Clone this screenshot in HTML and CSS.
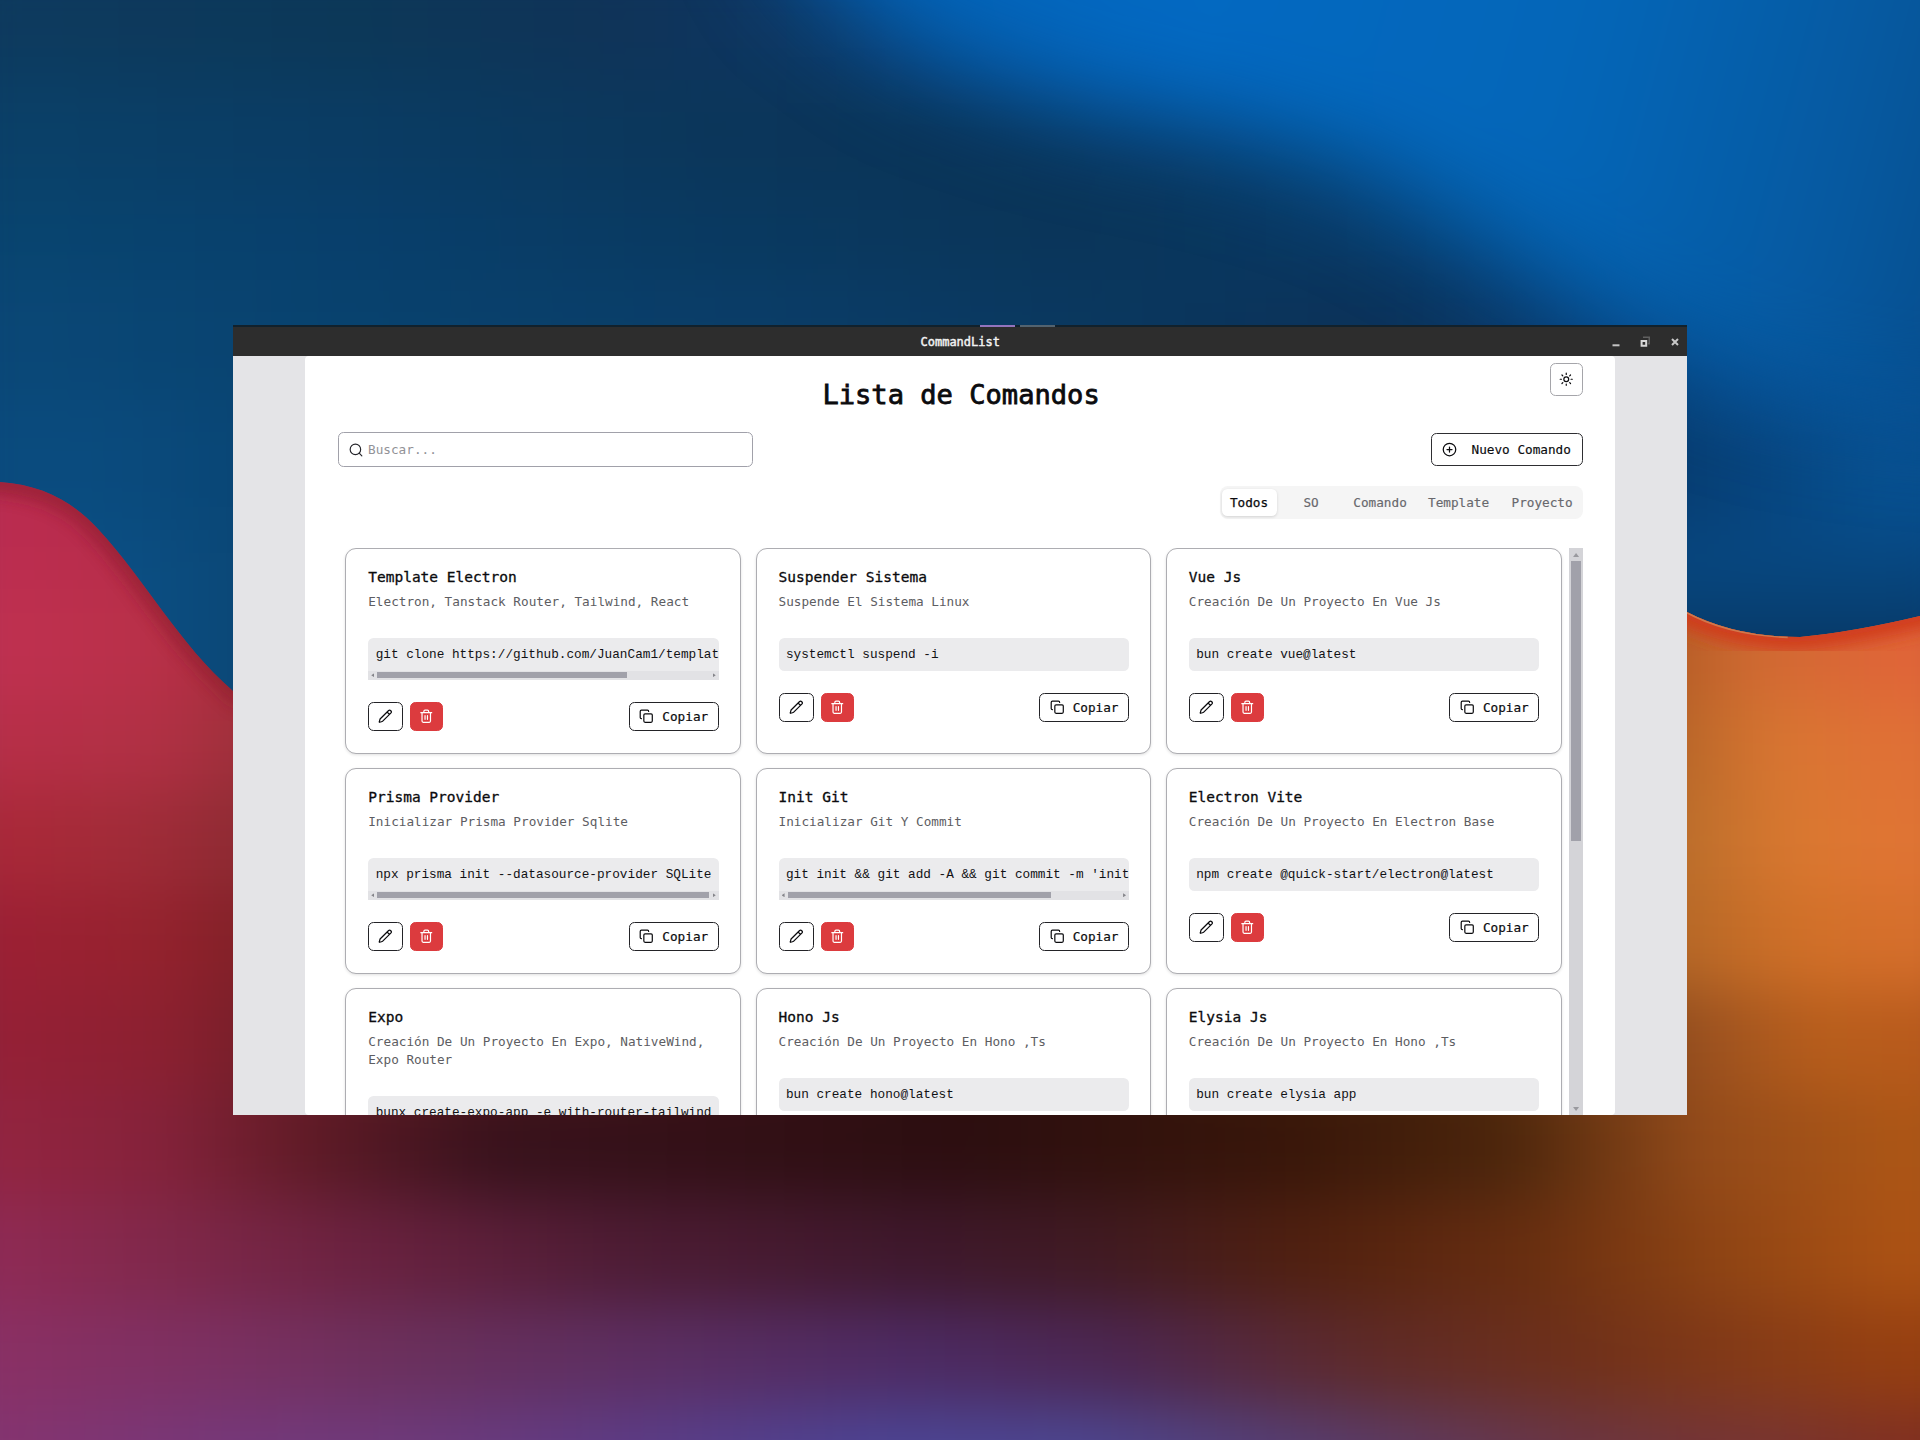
FILE: index.html
```html
<!DOCTYPE html>
<html lang="es">
<head>
<meta charset="utf-8">
<title>CommandList</title>
<link rel="stylesheet" href="styles.css">
</head>
<body>
<svg class="sprite" aria-hidden="true">
  <symbol id="pencil" viewBox="0 0 24 24"><path d="M21.17 6.81a1 1 0 0 0-3.99-3.99L3.84 16.17a2 2 0 0 0-.5.83l-1.32 4.35a.5.5 0 0 0 .62.62l4.35-1.32a2 2 0 0 0 .83-.5zM15 5l4 4"/></symbol>
  <symbol id="trash" viewBox="0 0 24 24"><path d="M3 6h18M19 6v14c0 1-1 2-2 2H7c-1 0-2-1-2-2V6M8 6V4c0-1 1-2 2-2h4c1 0 2 1 2 2v2M10 11v6M14 11v6"/></symbol>
  <symbol id="copy" viewBox="0 0 24 24"><rect x="8" y="8" width="14" height="14" rx="2"/><path d="M4 16c-1.1 0-2-.9-2-2V4c0-1.1.9-2 2-2h10c1.1 0 2 .9 2 2"/></symbol>
</svg>
<div class="wallpaper">
  <div class="sky"><i class="s1"></i><i class="s2"></i><i class="s3"></i><i class="s4"></i><i class="s5"></i><i class="s6"></i></div>
  <svg class="glow" viewBox="0 0 1568 1176">
    <defs>
      <filter id="soft" filterUnits="userSpaceOnUse" x="300" y="-400" width="1700" height="1200" color-interpolation-filters="sRGB"><feGaussianBlur stdDeviation="40"/></filter>
      <linearGradient id="azure" x1="640" y1="0" x2="1640" y2="260" gradientUnits="userSpaceOnUse">
        <stop offset="0" stop-color="#0260b2"/><stop offset=".3" stop-color="#0369c2"/><stop offset=".62" stop-color="#0466b8"/><stop offset=".85" stop-color="#0659a0"/><stop offset="1" stop-color="#074b88"/>
      </linearGradient>
    </defs>
    <path d="M570-200L660-20L750 46L870 86L1000 112L1110 145L1220 205L1330 275L1440 320L1560 340L1900 350V-200Z" fill="url(#azure)" filter="url(#soft)"/>
  </svg>
  <div class="dunes">
    <div class="bands"><i class="d1"></i><i class="d2"></i><i class="d3"></i><i class="d4"></i><i class="d5"></i><i class="d6"></i><i class="d7"></i><i class="d8"></i><i class="d9"></i><i class="d10"></i></div>
    <svg class="rims" viewBox="0 0 1568 1176">
      <defs><filter id="rim" x="-20%" y="-40%" width="140%" height="180%"><feGaussianBlur stdDeviation="7"/></filter></defs>
      <path d="M-20 393C35 396 60 410 80 432C120 475 145 525 200 572" fill="none" stroke="#8a1a2c" stroke-width="14" opacity=".75" filter="url(#rim)"/>
      <path d="M1360 492Q1410 520 1470 520Q1515 516 1590 497" fill="none" stroke="#d03a1e" stroke-width="22" filter="url(#rim)"/>
      <path d="M1376 499Q1410 518 1460 520" fill="none" stroke="#d0784c" stroke-width="2.5"/>
    </svg>
  </div>
</div>

<main class="window">
  <div class="backdrop-strip"><i class="mark violet"></i><i class="mark grey"></i></div>
  <header class="titlebar">
    <span class="window-title">CommandList</span>
    <div class="window-controls">
      <svg width="8" height="12" viewBox="0 0 8 12"><path d="M.5 8.3h7v2h-7z" fill="#c4c4c4"/></svg>
      <svg width="10" height="12" viewBox="0 0 10 12"><path d="M3 1.2h6.3v6.4H7.8" fill="none" stroke="#606060" stroke-width="1.6"/><path d="M1.6 5h4.6v4.7H1.6z" fill="none" stroke="#d8d8d8" stroke-width="2"/></svg>
      <svg width="8" height="12" viewBox="0 0 8 12"><path d="M1 3l6 6M7 3L1 9" stroke="#c8c8c8" stroke-width="2"/></svg>
    </div>
  </header>
  <div class="page">
    <section class="panel">
      <div class="heading">
        <h1>Lista de Comandos</h1>
        <button class="theme"><svg class="icon" width="14.5" height="14.5" viewBox="0 0 24 24"><circle cx="12" cy="12" r="4"/><path d="M12 2v2M12 20v2M4.9 4.9l1.4 1.4M17.7 17.7l1.4 1.4M2 12h2M20 12h2M6.3 17.7l-1.4 1.4M19.1 4.9l-1.4 1.4"/></svg></button>
      </div>
      <div class="toolbar">
        <label class="search"><svg class="icon" width="14" height="14" viewBox="0 0 24 24"><circle cx="11" cy="11" r="9"/><path d="M22 22l-4.5-4.5"/></svg><span>Buscar...</span></label>
        <button class="create"><svg class="icon" width="15" height="15" viewBox="0 0 24 24"><circle cx="12" cy="12" r="10"/><path d="M8 12h8M12 8v8"/></svg><span>Nuevo Comando</span></button>
      </div>
      <nav class="tabs"><span class="tab active">Todos</span><span class="tab">SO</span><span class="tab">Comando</span><span class="tab">Template</span><span class="tab">Proyecto</span></nav>
      <div class="list">
        <div class="cards">
          <article class="card"><h2>Template Electron</h2><p>Electron, Tanstack Router, Tailwind, React</p>
            <div class="code"><code>git clone https://github.com/JuanCam1/templat</code><div class="hbar"><b></b><span class="track"><i class="thumb" style="width:75.2%"></i></span><b class="next"></b></div></div>
            <div class="actions"><button class="edit"><svg class="icon"><use href="#pencil"/></svg></button><button class="delete"><svg class="icon"><use href="#trash"/></svg></button><button class="copy"><svg class="icon"><use href="#copy"/></svg>Copiar</button></div></article>
          <article class="card"><h2>Suspender Sistema</h2><p>Suspende El Sistema Linux</p>
            <div class="code"><code>systemctl suspend -i</code></div>
            <div class="actions"><button class="edit"><svg class="icon"><use href="#pencil"/></svg></button><button class="delete"><svg class="icon"><use href="#trash"/></svg></button><button class="copy"><svg class="icon"><use href="#copy"/></svg>Copiar</button></div></article>
          <article class="card"><h2>Vue Js</h2><p>Creación De Un Proyecto En Vue Js</p>
            <div class="code"><code>bun create vue@latest</code></div>
            <div class="actions"><button class="edit"><svg class="icon"><use href="#pencil"/></svg></button><button class="delete"><svg class="icon"><use href="#trash"/></svg></button><button class="copy"><svg class="icon"><use href="#copy"/></svg>Copiar</button></div></article>
          <article class="card"><h2>Prisma Provider</h2><p>Inicializar Prisma Provider Sqlite</p>
            <div class="code"><code>npx prisma init --datasource-provider SQLite</code><div class="hbar"><b></b><span class="track"><i class="thumb" style="width:99.8%"></i></span><b class="next"></b></div></div>
            <div class="actions"><button class="edit"><svg class="icon"><use href="#pencil"/></svg></button><button class="delete"><svg class="icon"><use href="#trash"/></svg></button><button class="copy"><svg class="icon"><use href="#copy"/></svg>Copiar</button></div></article>
          <article class="card"><h2>Init Git</h2><p>Inicializar Git Y Commit</p>
            <div class="code"><code>git init &amp;&amp; git add -A &amp;&amp; git commit -m 'init</code><div class="hbar"><b></b><span class="track"><i class="thumb" style="width:79.3%"></i></span><b class="next"></b></div></div>
            <div class="actions"><button class="edit"><svg class="icon"><use href="#pencil"/></svg></button><button class="delete"><svg class="icon"><use href="#trash"/></svg></button><button class="copy"><svg class="icon"><use href="#copy"/></svg>Copiar</button></div></article>
          <article class="card"><h2>Electron Vite</h2><p>Creación De Un Proyecto En Electron Base</p>
            <div class="code"><code>npm create @quick-start/electron@latest</code></div>
            <div class="actions"><button class="edit"><svg class="icon"><use href="#pencil"/></svg></button><button class="delete"><svg class="icon"><use href="#trash"/></svg></button><button class="copy"><svg class="icon"><use href="#copy"/></svg>Copiar</button></div></article>
          <article class="card"><h2>Expo</h2><p>Creación De Un Proyecto En Expo, NativeWind, Expo Router</p>
            <div class="code"><code>bunx create-expo-app -e with-router-tailwind</code></div></article>
          <article class="card"><h2>Hono Js</h2><p>Creación De Un Proyecto En Hono ,Ts</p>
            <div class="code"><code>bun create hono@latest</code></div></article>
          <article class="card"><h2>Elysia Js</h2><p>Creación De Un Proyecto En Hono ,Ts</p>
            <div class="code"><code>bun create elysia app</code></div></article>
        </div>
        <div class="vbar"><b></b><i></i><b class="down"></b></div>
      </div>
    </section>
  </div>
</main>
</body>
</html>
```

FILE: styles.css
```css
* { box-sizing: border-box; }
body {
  margin: 0; width: 1920px; height: 1440px; overflow: hidden; position: relative;
  background: #0a3a62; color: #0b0b0e;
  font-family: "DejaVu Sans Mono", "Liberation Mono", monospace; font-size: 12.7px;
  padding: 325px 0 0 232.5px;
}
h1, h2, p { margin: 0; font-weight: 400; }
button { font: inherit; color: inherit; background: #fff; padding: 0; display: flex; align-items: center; }
.sprite { display: none; }
.icon { fill: none; stroke: currentColor; stroke-width: 2; stroke-linecap: round; stroke-linejoin: round; flex: none; }

/* Desktop wallpaper */
.wallpaper { position: absolute; inset: 0; overflow: hidden; }
.wallpaper i { display: block; }
.glow, .rims { position: absolute; left: 0; top: 0; width: 1920px; height: 1440px; }
.sky { position: absolute; inset: -60px; filter: blur(34px); }
.s1 { height: 140px; background: linear-gradient(90deg, #0d3a5e 5%, #0c3858 20%, #0f3358 33%, #0c3a6c 50%, #0a3a6c); }
.s2 { height: 110px; background: linear-gradient(90deg, #0a4068 5%, #0a3c64 20%, #0b365a 38%, #0a3458 50%, #08345c); }
.s3 { height: 90px; background: linear-gradient(90deg, #08446f 5%, #083f6c 20%, #093a62 35%, #0a3559 55%, #083a68 75%, #06509a); }
.s4 { height: 120px; background: linear-gradient(90deg, #0a4776 5%, #08426e 20%, #0a3d68 40%, #0a375e 58%, #0b3158 70%, #083c70 82%, #06529a 95%); }
.s5 { height: 130px; background: linear-gradient(90deg, #0a4b7e 8%, #094574 16%, #0a375e 60%, #073c70 85%, #075090 95%); }
.s6 { height: 970px; background: linear-gradient(90deg, #0b5086 8%, #0b4674 16%, #0a375e 60%, transparent 80%), linear-gradient(#074a86, #07447a 60px, #073662 130px, #072f54 200px); }
.dunes {
  position: absolute; inset: 0;
  clip-path: path("M0 482C43 485 73 502 98 529C147 582 178 643 233 691L400 760L1500 760L1687 612Q1735 637 1800 637Q1853 632 1920 616V1440H0Z");
}
.bands { position: absolute; left: -60px; right: -60px; top: 400px; filter: blur(30px); }
.d1 { height: 180px; background: linear-gradient(90deg, #bb2c50 3%, #b52c48 12%, #a82c40 20%, #b05024 82%, #d45a2c 90%, #dc5a34); }
.d2 { height: 120px; background: linear-gradient(90deg, #bf3050 3%, #b83048 11%, #a22c38 16%, #b05a24 84%, #d06a32 89%, #e06438 96%); }
.d3 { height: 90px; background: linear-gradient(90deg, #b72f48 3%, #b03044 11%, #9a3038 16%, #b06226 84%, #d87632 90%, #e07036 96%); }
.d4 { height: 100px; background: linear-gradient(90deg, #aa2838 3%, #a02c38 10%, #8a2a32 16%, #b46c2a 84%, #da7830 91%, #e07434 96%); }
.d5 { height: 100px; background: linear-gradient(90deg, #9c2034 3%, #96222e 10%, #7e2026 16%, #b06626 84%, #d07028 91%, #d66f2c 96%); }
.d6 { height: 100px; background: linear-gradient(90deg, #952036 3%, #8c2030 11%, #6e1e26 17%, #2a0c0c 50%, #48240a 74%, #985020 86%, #b85e1c 92%, #b85a1c 97%); }
.d7 { height: 110px; background: linear-gradient(90deg, #932440 3%, #84223a 11%, #641c28 17%, #38121c 27%, #2c0e10 50%, #38160a 66%, #4c260c 77%, #924a1a 86%, #ac5616 96%); }
.d8 { height: 105px; background: linear-gradient(90deg, #8f2a54 3%, #80284a 11%, #6c2240 20%, #4e1c34 33%, #3e182c 48%, #401a22 57%, #50200f 67%, #682e10 78%, #8e4414 87%, #ac5214 96%); }
.d9 { height: 100px; background: linear-gradient(90deg, #8a3064 3%, #7c3062 13%, #6a305c 23%, #5a2e62 36%, #4c2a62 48%, #4c2650 58%, #5e2a28 70%, #6e301a 80%, #883c16 90%, #984010 97%); }
.d10 { height: 180px; background: linear-gradient(90deg, #843470 3%, #75387a 14%, #6c3a7c 24%, #5c3c86 34%, #4c4494 46%, #4c4690 56%, #583c6c 68%, #6a3544 80%, #783430 90%, #802f20 97%); }

/* Application window */
.window { position: relative; width: 1454.5px; height: 790px; display: flex; flex-direction: column; overflow: hidden; background: #e4e4e7; }
.backdrop-strip { height: 2px; flex: none; background: #11212c; display: flex; gap: 5px; padding-left: 747.5px; }
.mark { width: 35px; height: 2px; }
.violet { background: #9474bd; }
.grey { background: #53636f; }
.titlebar { height: 29px; flex: none; background: #2d2d2d; display: grid; grid-template-columns: 1fr auto 1fr; align-items: center; }
.window-title { grid-column: 2; padding-left: 1px; color: #f2f2f2; font-size: 12px; -webkit-text-stroke: .45px; }
.window-controls { display: flex; justify-content: flex-end; gap: 20.5px; padding-right: 8.5px; }
.page { flex: 1; min-height: 0; display: flex; justify-content: center; }
.panel { width: 1310px; background: #fff; border-radius: 4px; padding: 7px 31.7px 0 33.3px; display: flex; flex-direction: column; }
.heading { flex: none; height: 69px; display: grid; grid-template-columns: 33px 1fr 33px; }
h1 { grid-column: 2; text-align: center; font-size: 27.1px; line-height: 64px; padding-left: 1px; -webkit-text-stroke: .8px; }
.theme { width: 33px; height: 33px; justify-content: center; border: 1px solid #a5a5aa; border-radius: 5.5px; }
.toolbar { flex: none; height: 35px; display: flex; justify-content: space-between; align-items: center; }
.search { width: 415px; height: 35px; border: 1px solid #a1a1aa; border-radius: 5.5px; display: flex; align-items: center; padding-left: 10px; gap: 5px; color: #25252a; }
.search span { color: #929297; }
.create { width: 152.5px; height: 33px; border: 1px solid #2e2e32; border-radius: 5.5px; padding-left: 10.5px; gap: 14.5px; -webkit-text-stroke: .15px; }
.tabs { flex: none; align-self: flex-end; margin-top: 19px; height: 33px; padding: 3px 2px; width: 363.5px; border-radius: 8px; background: #f5f5f5; display: grid; grid-template-columns: 55px 69px 69px 88px 79px; color: #68686d; -webkit-text-stroke: .15px; }
.tab { display: flex; align-items: center; justify-content: center; border-radius: 5.5px; }
.active { background: #fff; color: #0b0b0e; box-shadow: 0 1px 3px rgba(0,0,0,.14); -webkit-text-stroke: .25px; }
.list { flex: 1; min-height: 0; margin-top: 29px; display: flex; justify-content: space-between; padding-left: 7.4px; overflow: hidden; }
.cards { display: grid; grid-template-columns: repeat(3, 395.5px); grid-auto-rows: 205.5px; gap: 14.5px 14.8px; }
.card { border: 1px solid #adadb2; border-radius: 11px; padding: 20px 21.2px 0 21.8px; box-shadow: 0 1px 3px rgba(0,0,0,.12); background: #fff; min-width: 0; }
h2 { font-size: 14.5px; line-height: 17.5px; -webkit-text-stroke: .3px; }
.card p { margin-top: 6.2px; font-size: 12.7px; line-height: 18.2px; color: #5d5d62; }
.code { margin-top: 27px; border-radius: 5.5px 5.5px 0 0; background: #ebebed; overflow: hidden; }
.code:not(:has(.hbar)) { border-radius: 5.5px; }
.code code { display: block; height: 32.7px; padding-left: 7.4px; font: 12.73px/33.6px "Liberation Mono", monospace; white-space: nowrap; color: #111114; }
.hbar { height: 9.3px; background: #e2e2e5; display: flex; align-items: center; padding: 0 3px; gap: 3px; }
.hbar b { width: 3px; height: 4px; background: #85858a; clip-path: polygon(0 50%, 100% 0, 100% 100%); }
.hbar .next { clip-path: polygon(0 0, 100% 50%, 0 100%); }
.track { flex: 1; height: 6px; display: flex; }
.thumb { background: #a1a1aa; height: 6px; }
.actions { display: flex; margin-top: 22px; gap: 7px; }
.actions button { height: 29px; border: 1px solid #232327; border-radius: 5.5px; justify-content: center; }
.actions .icon { width: 14.5px; height: 14.5px; }
.actions .edit { width: 35px; }
.actions .delete { width: 33px; background: #dc3b3e; border-color: #dc3b3e; color: #fff; }
.actions .copy { width: 90px; margin-left: auto; gap: 8.5px; -webkit-text-stroke: .2px; }
.vbar { width: 14px; background: #d4d4d8; display: flex; flex-direction: column; align-items: center; padding: 5px 0 4px; }
.vbar i { width: 10px; height: 280px; margin-top: 4px; background: #a1a1aa; }
.vbar b { width: 6px; height: 4px; background: #99999e; clip-path: polygon(50% 0, 100% 100%, 0 100%); }
.vbar .down { margin-top: auto; clip-path: polygon(0 0, 100% 0, 50% 100%); }
```
